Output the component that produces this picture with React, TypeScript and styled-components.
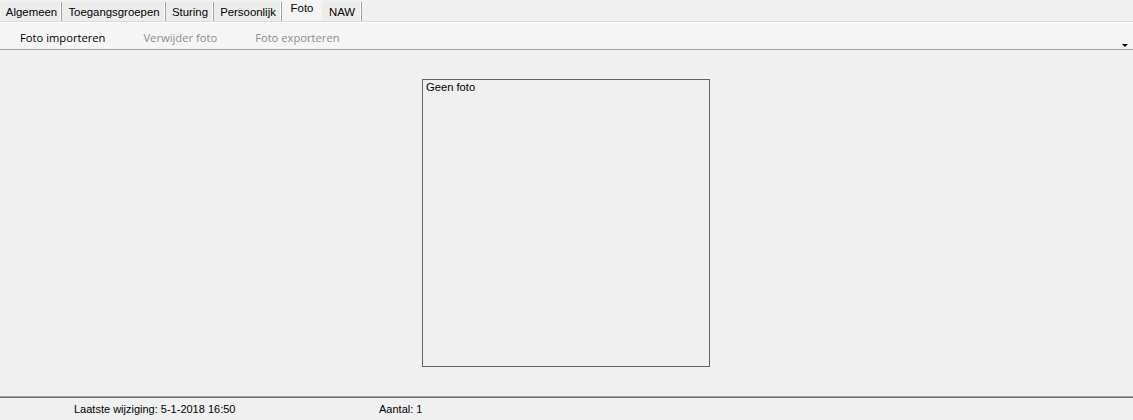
import React from "react";
import styled, { createGlobalStyle } from "styled-components";

const Global = createGlobalStyle`
  html, body { margin: 0; padding: 0; background: #f0f0f0; }
  body { font-family: "Liberation Sans", Arial, sans-serif; font-size: 11px; color: #000; }
  #root { width: 1133px; height: 420px; }
`;

const Window = styled.div`
  width: 1133px;
  height: 420px;
  display: flex;
  flex-direction: column;
  background: #f0f0f0;
  overflow: hidden;
`;

const TabStrip = styled.div`
  height: 22px;
  display: flex;
  align-items: flex-end;
  padding-left: 1px;
  border-bottom: 1px solid #d9d9d9;
  box-sizing: border-box;
`;

const Tab = styled.div<{ $active?: boolean; $w: number }>`
  width: ${(p) => p.$w}px;
  height: ${(p) => (p.$active ? "21px" : "19px")};
  display: flex;
  align-items: center;
  justify-content: center;
  padding-bottom: ${(p) => (p.$active ? "5px" : "0")};
  padding-left: ${(p) => (p.$active ? "0" : "1px")};
  box-sizing: border-box;
  font-size: 11.4px;
  color: #000;
  background: ${(p) => (p.$active ? "#f4f4f4" : "#ececec")};
  border-right: ${(p) => (p.$active ? "none" : "1px solid #a0a0a0")};
  box-shadow: ${(p) => (p.$active ? "none" : "inset -1px 0 0 #ffffff")};
  white-space: nowrap;
`;

const Toolbar = styled.div`
  height: 28px;
  display: flex;
  align-items: center;
  padding-left: 1px;
  padding-top: 2px;
  box-sizing: border-box;
  background: #f5f5f5;
  border-top: 1px solid #ffffff;
  border-bottom: 1px solid #a0a0a0;
  position: relative;
`;

const ToolButton = styled.div<{ $disabled?: boolean }>`
  font-family: "Open Sans", "Noto Sans", sans-serif;
  font-size: 11.2px;
  padding: 0 19px;
  color: ${(p) => (p.$disabled ? "#8d8d8d" : "#000")};
  white-space: nowrap;
`;

const Overflow = styled.div`
  position: absolute;
  right: 5px;
  bottom: 2px;
  width: 0;
  height: 0;
  border-left: 3px solid transparent;
  border-right: 3px solid transparent;
  border-top: 3px solid #000;
`;

const Content = styled.div`
  flex: 1;
  display: flex;
  justify-content: center;
  padding-top: 29px;
  padding-right: 1px;
`;

const PhotoFrame = styled.div`
  width: 288px;
  height: 288px;
  box-sizing: border-box;
  border: 1px solid #646464;
  padding: 1px 3px;
  font-size: 11.2px;
`;

const StatusBar = styled.div`
  height: 24px;
  display: flex;
  align-items: center;
  border-top: 1px solid #a0a0a0;
  box-shadow: inset 0 1px 0 #6e6e6e;
  box-sizing: border-box;
  font-size: 11px;
  padding-left: 74px;
`;

const StatusField = styled.div<{ $w: number }>`
  width: ${(p) => p.$w}px;
  white-space: nowrap;
`;

const tabs = [
  { label: "Algemeen", w: 61 },
  { label: "Toegangsgroepen", w: 104 },
  { label: "Sturing", w: 48 },
  { label: "Persoonlijk", w: 68 },
  { label: "Foto", w: 40, active: true },
  { label: "NAW", w: 40 },
];

export default function App() {
  return (
    <>
      <Global />
      <Window>
        <TabStrip>
          {tabs.map((t) => (
            <Tab key={t.label} $w={t.w} $active={t.active}>
              {t.label}
            </Tab>
          ))}
        </TabStrip>
        <Toolbar>
          <ToolButton>Foto importeren</ToolButton>
          <ToolButton $disabled>Verwijder foto</ToolButton>
          <ToolButton $disabled>Foto exporteren</ToolButton>
          <Overflow />
        </Toolbar>
        <Content>
          <PhotoFrame>Geen foto</PhotoFrame>
        </Content>
        <StatusBar>
          <StatusField $w={305}>Laatste wijziging: 5-1-2018 16:50</StatusField>
          <StatusField $w={100}>Aantal: 1</StatusField>
        </StatusBar>
      </Window>
    </>
  );
}
